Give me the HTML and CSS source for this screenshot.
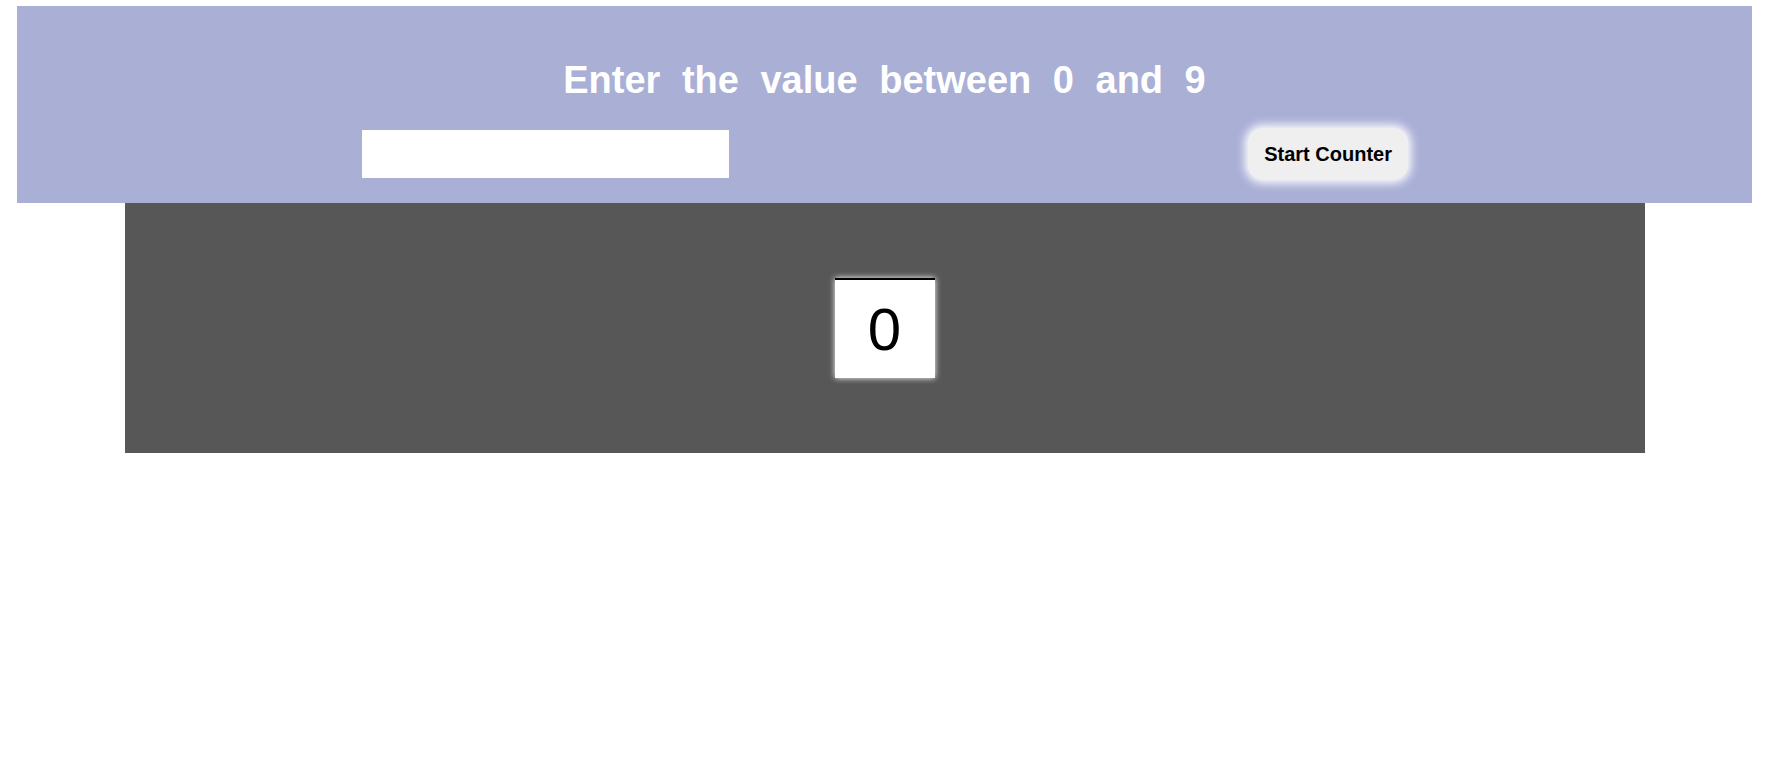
FILE: index.html
```html
<!DOCTYPE html>
<html lang="en">
<head>
<meta charset="utf-8">
<title>Counter</title>
<link rel="stylesheet" href="styles.css">
</head>
<body>
<div class="page">
  <header class="header">
    <h1 class="title">Enter the value between 0 and 9</h1>
    <div class="controls">
      <input class="value-input" type="text">
      <button class="start-btn" type="button">Start Counter</button>
    </div>
  </header>
  <section class="panel">
    <div class="digit">0</div>
  </section>
</div>
</body>
</html>
```
FILE: styles.css
```css
html, body {
  margin: 0;
  padding: 0;
  background: #ffffff;
}

.page {
  padding: 6px 13px 0 17px;
  font-family: "Liberation Sans", Arial, sans-serif;
}

.header {
  background: #aaafd6;
  padding: 52px 0 23px;
  display: flex;
  flex-direction: column;
}

.title {
  margin: 0;
  text-align: center;
  color: #ffffff;
  font-size: 38px;
  line-height: 44px;
  font-weight: bold;
  word-spacing: 11px;
}

.controls {
  margin-top: 26px;
  padding: 0 344px 0 345px;
  display: flex;
  justify-content: space-between;
  align-items: center;
}

.value-input {
  width: 367px;
  height: 48px;
  box-sizing: border-box;
  border: 0;
  background: #ffffff;
  outline: none;
  padding: 0 8px;
  font-size: 20px;
}

.start-btn {
  height: 52px;
  padding: 0 16px;
  border: 0;
  border-radius: 15px;
  background: #efefef;
  color: #000000;
  font-family: "Liberation Sans", Arial, sans-serif;
  font-size: 20px;
  font-weight: bold;
  box-shadow: 0 0 10px 3px #ffffff;
}

.panel {
  width: 1520px;
  margin: 0 auto;
  background: #575757;
  padding: 75px 0 75px;
  display: flex;
  justify-content: center;
}

.digit {
  width: 100px;
  height: 100px;
  box-sizing: border-box;
  border-top: 2px solid #000000;
  background: #ffffff;
  box-shadow: 0 0 6px #ffffff;
  display: flex;
  align-items: center;
  justify-content: center;
  font-size: 60px;
  color: #000000;
}
```
